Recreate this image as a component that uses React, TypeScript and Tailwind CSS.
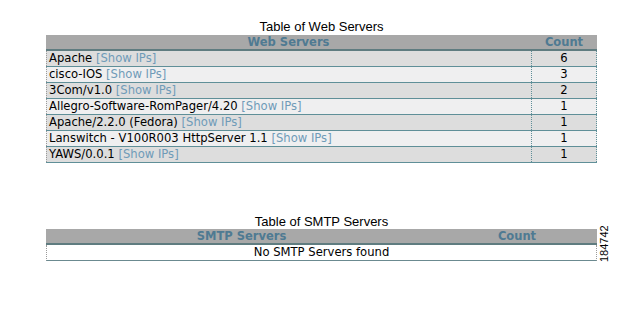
import React from "react";

const rows: [string, number][] = [
  ["Apache", 6],
  ["cisco-IOS", 3],
  ["3Com/v1.0", 2],
  ["Allegro-Software-RomPager/4.20", 1],
  ["Apache/2.2.0 (Fedora)", 1],
  ["Lanswitch - V100R003 HttpServer 1.1", 1],
  ["YAWS/0.0.1", 1],
];

const cellFont = { fontFamily: '"DejaVu Sans", Verdana, sans-serif' };

export default function App() {
  return (
    <div className="relative w-[641px] h-[309px] bg-white overflow-hidden">
      <div className="ml-[46px] w-[551px] pt-[19px]">
        <div
          className="h-[16px] text-center text-[13px] leading-[16px] text-black"
          style={{ fontFamily: '"Liberation Sans", Arial, sans-serif' }}
        >
          Table of Web Servers
        </div>
        <div className="flex h-[16px] bg-[#a8a8a8] border-b-2 border-[#5f7c80] text-[11.5px] leading-[14px] font-bold text-[#4f7a92]" style={cellFont}>
          <div className="flex-1 text-center">Web Servers</div>
          <div className="w-[66px] text-center">Count</div>
        </div>
        {rows.map(([name, count], i) => (
          <div
            key={name}
            className={`flex h-[16px] border-b border-[#5f8f98] text-[11.6px] leading-[15px] text-black ${
              i % 2 === 0 ? "bg-[#dddddd]" : "bg-[#efeff0]"
            }`}
            style={cellFont}
          >
            <div className="flex-1 pl-[2px] border-l border-dotted border-[#9a9a9a] whitespace-nowrap">
              {name} <span className="text-[#6f9bb8]">[Show IPs]</span>
            </div>
            <div className="w-[66px] text-center border-l border-r border-dotted border-[#5f8f98]">
              {count}
            </div>
          </div>
        ))}

        <div
          className="mt-[52px] h-[14px] text-center text-[13px] leading-[14px] text-black"
          style={{ fontFamily: '"Liberation Sans", Arial, sans-serif' }}
        >
          Table of SMTP Servers
        </div>
        <div className="flex h-[16px] bg-[#a8a8a8] border-b-2 border-[#5f7c80] text-[11.5px] leading-[14px] font-bold text-[#4f7a92]" style={cellFont}>
          <div className="flex-1 text-center">SMTP Servers</div>
          <div className="w-[160px] text-center">Count</div>
        </div>
        <div
          className="h-[16px] bg-white border-b border-[#6b8a90] border-l border-r border-dotted text-center text-[11.6px] leading-[15px] text-black"
          style={{ ...cellFont, borderLeftColor: "#9a9a9a", borderRightColor: "#9a9a9a", borderBottomStyle: "solid" }}
        >
          No SMTP Servers found
        </div>
      </div>
      <div
        className="absolute left-[598px] top-[262px] origin-top-left -rotate-90 text-[11px] leading-[12px] text-black whitespace-nowrap"
        style={{ fontFamily: '"Liberation Sans", Arial, sans-serif' }}
      >
        184742
      </div>
    </div>
  );
}
